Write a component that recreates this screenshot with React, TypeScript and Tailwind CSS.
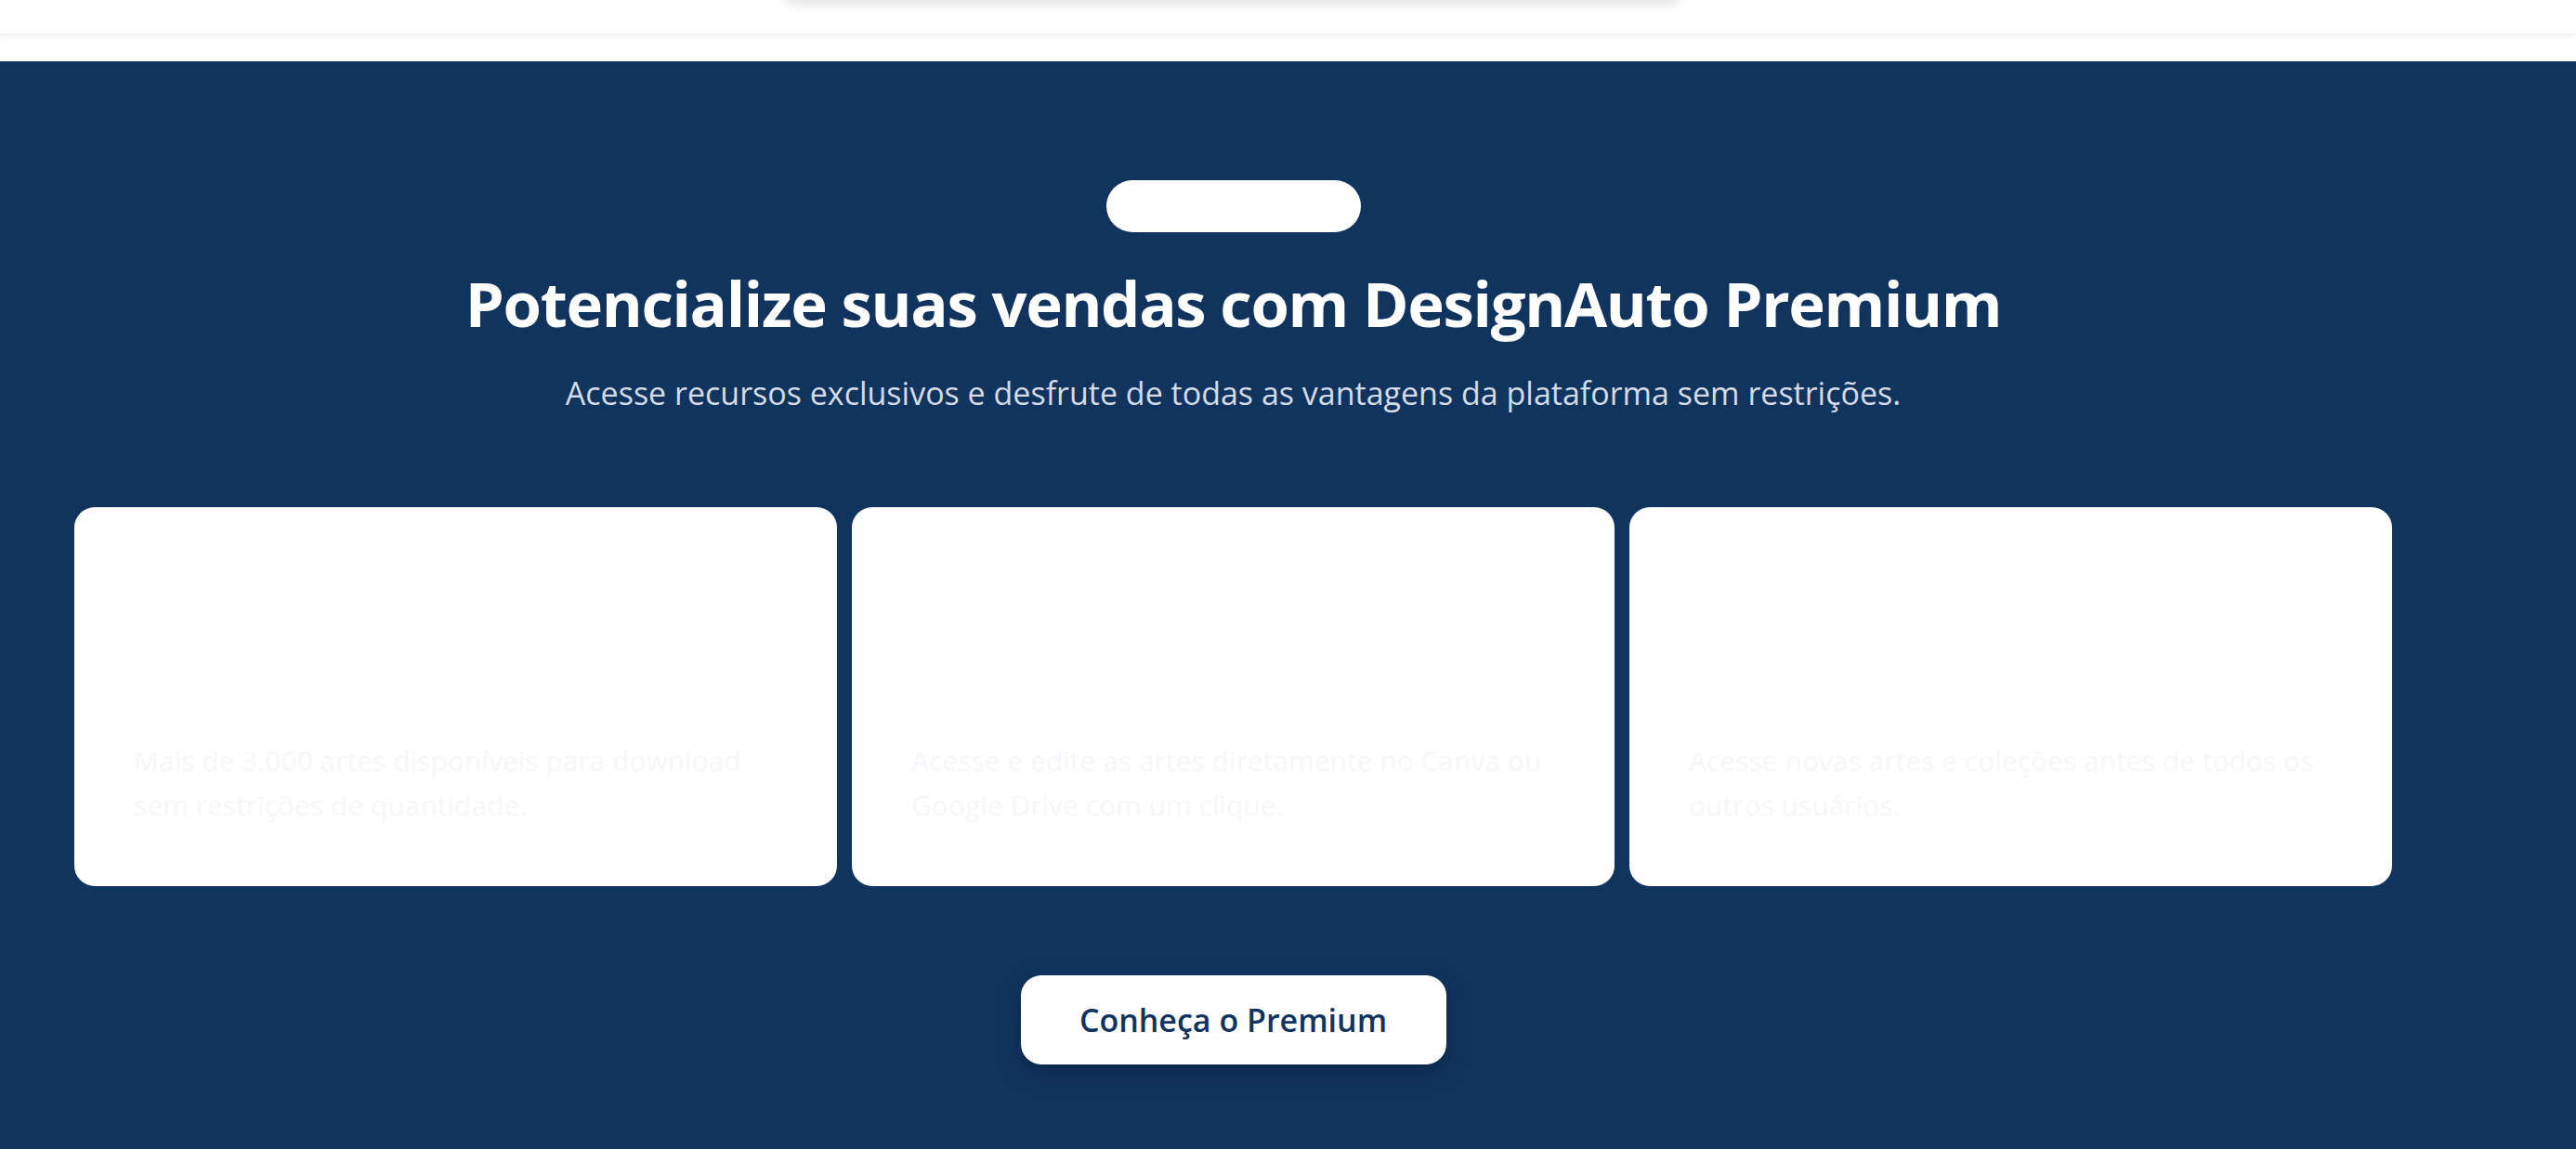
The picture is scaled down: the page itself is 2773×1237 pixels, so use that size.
import React from "react";

const font = { fontFamily: '"Segoe UI", "Open Sans", "Noto Sans", sans-serif' };

const cards = [
  ["Mais de 3.000 artes disponíveis para download", "sem restrições de quantidade."],
  ["Acesse e edite as artes diretamente no Canva ou", "Google Drive com um clique."],
  ["Acesse novas artes e coleções antes de todos os", "outros usuários."],
];

export default function App() {
  return (
    <div className="min-h-[1237px] w-full bg-white relative overflow-hidden" style={font}>
      <div className="absolute top-[-40px] left-[843px] w-[968px] h-[40px] rounded-b-2xl bg-white shadow-[0_4px_14px_rgba(0,0,0,0.13)] z-20" />
      <header className="h-[37px] bg-white shadow-[0_3px_6px_rgba(0,0,0,0.05)] border-b border-[#efefef] relative z-10" />
      <div className="h-[29px] bg-white" />
      <section className="bg-[#11345e] min-h-[1171px] pt-[128px]">
        <div className="w-[2655px] flex flex-col items-center">
          <div className="w-[274px] h-[56px] rounded-full bg-white" />
          <h2 className="mt-[36px] text-[67px] leading-[1.2] font-bold text-white tracking-[-0.02em] whitespace-nowrap">
            Potencialize suas vendas com DesignAuto Premium
          </h2>
          <p className="mt-[32px] text-[34px] leading-[1.5] text-[#d4dbe6] whitespace-nowrap">
            Acesse recursos exclusivos e desfrute de todas as vantagens da plataforma sem restrições.
          </p>
          <div className="mt-[97px] w-full px-[80px] grid grid-cols-3 gap-[16px]">
            {cards.map((c, i) => (
              <div key={i} className="h-[408px] rounded-[22px] bg-white flex flex-col justify-end px-[64px] pb-[63px]">
                <p className="text-[30px] leading-[48px] text-[#f5f7fa] whitespace-nowrap">
                  {c[0]}
                  <br />
                  {c[1]}
                </p>
              </div>
            ))}
          </div>
          <button className="mt-[96px] w-[458px] h-[96px] rounded-[22px] bg-white text-[#11345e] text-[34px] font-semibold shadow-[0_8px_24px_rgba(0,0,0,0.25)]">
            Conheça o Premium
          </button>
        </div>
      </section>
    </div>
  );
}
